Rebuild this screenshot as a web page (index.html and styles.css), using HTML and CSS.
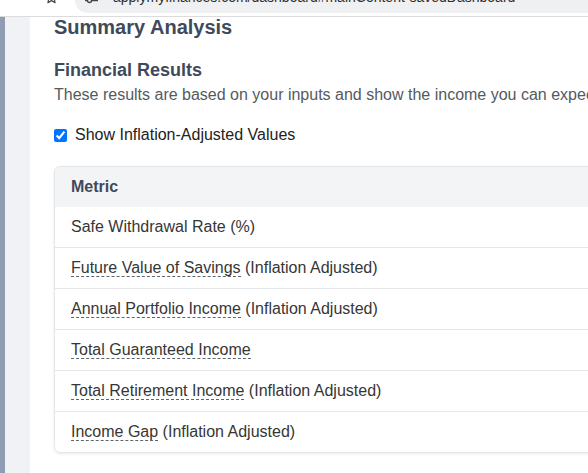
FILE: index.html
```html
<!DOCTYPE html>
<html lang="en">
<head>
<meta charset="utf-8">
<title>Summary Analysis</title>
<link rel="stylesheet" href="styles.css">
</head>
<body>
<div class="browser-bar">
  <svg class="star" width="15" height="15" viewBox="0 0 24 24"><path d="M12 2.8l2.75 5.9 6.45.75-4.8 4.4 1.3 6.35L12 17l-5.7 3.2 1.3-6.35-4.8-4.4 6.45-.75z" fill="none" stroke="#474747" stroke-width="1.9" stroke-linejoin="round"/></svg>
  <div class="omnibox">
    <svg class="tune" width="13" height="13" viewBox="0 0 13 13"><path d="M0 3.5h13M0 9.5h13" stroke="#474747" stroke-width="1.4"/><circle cx="8.5" cy="3.5" r="2" fill="#eff0f2" stroke="#474747" stroke-width="1.4"/><circle cx="4.5" cy="9.5" r="2" fill="#eff0f2" stroke="#474747" stroke-width="1.4"/></svg>
    <span class="url">applymyfinances.com/dashboard#mainContent-savedDashboard</span>
  </div>
</div>
<div class="layout">
  <div class="rail"></div>
  <div class="gutter"></div>
  <main class="panel">
    <h2 class="title">Summary Analysis</h2>
    <h3 class="subtitle">Financial Results</h3>
    <p class="desc">These results are based on your inputs and show the income you can expect to receive in retirement.</p>
    <label class="toggle"><input type="checkbox" checked> <span>Show Inflation-Adjusted Values</span></label>
    <div class="table-card">
      <table class="results">
        <thead>
          <tr><th class="col-metric">Metric</th><th class="col-value">Value</th></tr>
        </thead>
        <tbody>
          <tr><td>Safe Withdrawal Rate (%)</td><td class="val">4.0%</td></tr>
          <tr><td><span class="term">Future Value of Savings</span> (Inflation Adjusted)</td><td class="val">$0</td></tr>
          <tr><td><span class="term">Annual Portfolio Income</span> (Inflation Adjusted)</td><td class="val">$0</td></tr>
          <tr><td><span class="term">Total Guaranteed Income</span></td><td class="val">$0</td></tr>
          <tr><td><span class="term">Total Retirement Income</span> (Inflation Adjusted)</td><td class="val">$0</td></tr>
          <tr><td><span class="term">Income Gap</span> (Inflation Adjusted)</td><td class="val">$0</td></tr>
        </tbody>
      </table>
    </div>
  </main>
</div>
</body>
</html>
```
FILE: styles.css
```css
html, body {
  margin: 0;
  padding: 0;
  height: 100%;
  overflow: hidden;
}

body {
  font-family: "Liberation Sans", Arial, sans-serif;
  background: #ffffff;
  color: #333333;
}

.browser-bar {
  display: flex;
  align-items: flex-start;
  height: 16px;
  width: 1200px;
  border-bottom: 1px solid #dcdcdf;
  overflow: hidden;
  background: #ffffff;
}

.star {
  flex: 0 0 auto;
  margin-left: 44px;
  margin-top: -10px;
}

.omnibox {
  flex: 0 0 900px;
  height: 13px;
  margin-left: 16px;
  background: #eff0f2;
  border-bottom-left-radius: 14px;
  display: flex;
  align-items: flex-start;
  overflow: hidden;
}

.tune {
  flex: 0 0 auto;
  margin-left: 10px;
  margin-top: -9px;
}

.url {
  margin-left: 15px;
  margin-top: -12px;
  font-size: 14px;
  line-height: 18px;
  color: #2f2f2f;
  white-space: nowrap;
}

.layout {
  display: flex;
  width: 1200px;
  height: calc(100% - 17px);
}

.rail {
  flex: 0 0 5px;
  background: #8f9cb2;
}

.gutter {
  flex: 0 0 25px;
  background: #f1f2f5;
}

.panel {
  flex: 0 0 1100px;
  background: #ffffff;
  padding: 0 24px;
  box-sizing: border-box;
}

.title {
  margin: 0;
  font-size: 20px;
  line-height: 20px;
  font-weight: bold;
  color: #3e4a5b;
}

.subtitle {
  margin: 21px 0 0;
  font-size: 18px;
  line-height: 24px;
  font-weight: bold;
  color: #3e4a5b;
}

.desc {
  margin: 1px 0 0;
  font-size: 16px;
  line-height: 24px;
  color: #555a60;
  white-space: nowrap;
}

.toggle {
  display: flex;
  align-items: center;
  gap: 8px;
  margin-top: 16px;
  font-size: 16px;
  line-height: 24px;
  color: #222222;
}

.toggle input {
  margin: 0;
  width: 13px;
  height: 13px;
}

.table-card {
  margin-top: 19px;
  width: 900px;
  border: 1px solid #e4e6ea;
  border-radius: 6px;
  overflow: hidden;
  box-shadow: 0 1px 3px rgba(0, 0, 0, 0.09);
}

.results {
  width: 100%;
  border-collapse: collapse;
  font-size: 16px;
}

.results th {
  background: #f3f4f6;
  text-align: left;
  padding: 12px 16px;
  line-height: 16px;
  font-weight: bold;
  color: #3e4a5b;
}

.col-metric {
  width: 62%;
}

.results td {
  padding: 12px 16px;
  line-height: 16px;
  color: #363636;
  border-top: 1px solid #e6e7ea;
}

.results tbody tr:first-child td {
  border-top: none;
}

.term {
  border-bottom: 1px dashed #5f6670;
  cursor: help;
}
```
